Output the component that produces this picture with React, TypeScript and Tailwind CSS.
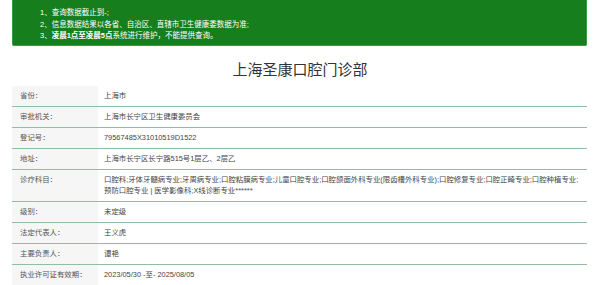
import * as React from 'react'

type Row = {
  label: string
  value: React.ReactNode
}

const rows: Row[] = [
  { label: '省份：', value: '上海市' },
  { label: '审批机关：', value: '上海市长宁区卫生健康委员会' },
  { label: '登记号：', value: '79567485X31010519D1522' },
  { label: '地址：', value: '上海市长宁区长宁路515号1层乙、2层乙' },
  {
    label: '诊疗科目：',
    value: (
      <>
        口腔科;牙体牙髓病专业;牙周病专业;口腔粘膜病专业;儿童口腔专业;口腔颌面外科专业(限齿槽外科专业);口腔修复专业;口腔正畸专业;口腔种植专业;
        <br />
        预防口腔专业 | 医学影像科;X线诊断专业******
      </>
    ),
  },
  { label: '级别：', value: '未定级' },
  { label: '法定代表人：', value: '王义虎' },
  { label: '主要负责人：', value: '谭艳' },
  { label: '执业许可证有效期：', value: '2023/05/30 -至- 2025/08/05' },
]

export default function App() {
  return (
    <div
      className="h-[285px] w-[600px] overflow-hidden bg-white"
      style={{ fontFamily: '"Liberation Sans", "Noto Sans CJK SC", sans-serif' }}
    >
      <div className="mx-[12px] w-[575px] rounded-b-[2px] border border-t-0 border-[#3a9a40] bg-[#177e1e] pb-[3px] pl-[27px] pt-[7px] text-[7.5px] leading-[11.5px] text-white">
        <p>1、查询数据截止到-;</p>
        <p>2、信息数据结果以各省、自治区、直辖市卫生健康委数据为准;</p>
        <p>
          3、<span className="font-bold">凌晨1点至凌晨5点</span>系统进行维护，不能提供查询。
        </p>
      </div>

      <h1 className="mt-[14px] text-center text-[15px] leading-[20px] text-[#333]">
        上海圣康口腔门诊部
      </h1>

      <div className="mx-[12px] mt-[6px] w-[575px]">
        {rows.map(row => (
          <div
            className="flex border-b border-[#8fbf9f] text-[7.4px] leading-[11px]"
            key={row.label}
          >
            <div className="w-[86px] shrink-0 bg-[#f6f6f6] py-[4.5px] pl-[8px] text-[#555]">
              {row.label}
            </div>
            <div className="flex-1 py-[4.5px] pl-[6px] pr-[4px] text-[#444]">
              {row.value}
            </div>
          </div>
        ))}
      </div>
    </div>
  )
}
